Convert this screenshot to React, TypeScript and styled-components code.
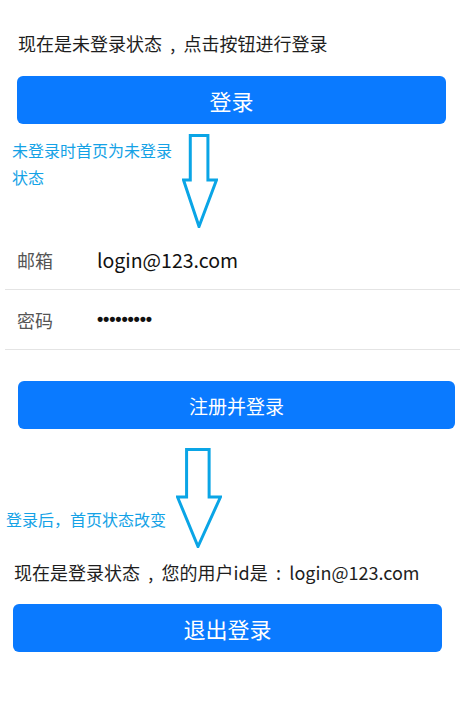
import React from "react";
import styled, { createGlobalStyle } from "styled-components";

const Global = createGlobalStyle`
  html, body { margin: 0; padding: 0; background: #fff; }
  body { font-family: "Noto Sans CJK SC", "Noto Sans", sans-serif; color: #222; }
`;

const Page = styled.div`
  width: 460px;
  display: flex;
  flex-direction: column;
`;

const StatusText = styled.div<{ $indent: number; $top: number }>`
  margin: ${(p) => p.$top}px 0 0 ${(p) => p.$indent}px;
  font-size: 18px;
  line-height: 24px;
  color: #1e1e1e;
  white-space: nowrap;
`;

const Punct = styled.span`
  display: inline-block;
  width: 1.2em;
  text-align: center;
`;

const BlueButton = styled.button<{ $left: number; $width: number; $top: number; $size: number }>`
  margin: ${(p) => p.$top}px 0 0 ${(p) => p.$left}px;
  width: ${(p) => p.$width}px;
  height: 48px;
  border: none;
  border-radius: 6px;
  background: #0a7aff;
  color: #fff;
  font-family: inherit;
  font-size: ${(p) => p.$size}px;
  display: flex;
  align-items: center;
  justify-content: center;
  padding: 0;
`;

const NoteRow = styled.div<{ $top: number }>`
  display: flex;
  align-items: flex-start;
  margin-top: ${(p) => p.$top}px;
`;

const Note = styled.div<{ $left: number; $width: number; $top: number }>`
  margin: ${(p) => p.$top}px 0 0 ${(p) => p.$left}px;
  width: ${(p) => p.$width}px;
  font-size: 16px;
  line-height: 27px;
  color: #14a2e6;
`;

const Form = styled.div`
  margin: 2px 0 0 5px;
  display: flex;
  flex-direction: column;
`;

const Field = styled.div`
  height: 59px;
  display: flex;
  align-items: center;
  border-bottom: 1.5px solid #e4e4e4;
`;

const Label = styled.span`
  width: 80px;
  padding-left: 12px;
  font-size: 18px;
  color: #555;
`;

const Value = styled.span`
  font-size: 19.5px;
  color: #111;
`;

const Dots = styled.span`
  font-family: "Liberation Sans", Arial, sans-serif;
  font-size: 18px;
  font-weight: 700;
  color: #111;
  letter-spacing: -0.2px;
`;

const Arrow = ({ width, height }: { width: number; height: number }) => {
  const sw = 3;
  const shaftL = width * 0.23;
  const shaftR = width * 0.72;
  const shaftB = height * 0.49;
  return (
    <svg width={width} height={height} viewBox={`0 0 ${width} ${height}`}>
      <polygon
        points={`${shaftL},${sw / 2} ${shaftR},${sw / 2} ${shaftR},${shaftB} ${width - sw / 2},${shaftB} ${width / 2 - 1},${height - sw / 2} ${sw / 2},${shaftB} ${shaftL},${shaftB}`}
        fill="none"
        stroke="#0aa5e6"
        strokeWidth={sw}
      />
    </svg>
  );
};

export default function App() {
  return (
    <Page>
      <Global />
      <StatusText $indent={18} $top={31}>
        现在是未登录状态<Punct>,</Punct>点击按钮进行登录
      </StatusText>
      <BlueButton $left={17} $width={429} $top={21} $size={22}>登录</BlueButton>
      <NoteRow $top={10}>
        <Note $left={12} $width={170} $top={3}>未登录时首页为未登录状态</Note>
        <Arrow width={36} height={94} />
      </NoteRow>
      <Form>
        <Field>
          <Label>邮箱</Label>
          <Value>login@123.com</Value>
        </Field>
        <Field>
          <Label>密码</Label>
          <Dots>•••••••••</Dots>
        </Field>
      </Form>
      <BlueButton $left={18} $width={437} $top={31} $size={19}>注册并登录</BlueButton>
      <NoteRow $top={19}>
        <Note $left={6} $width={170} $top={58}>登录后，首页状态改变</Note>
        <Arrow width={46} height={100} />
      </NoteRow>
      <StatusText $indent={14} $top={12}>
        现在是登录状态<Punct>,</Punct>您的用户id是<Punct>:</Punct>login@123.com
      </StatusText>
      <BlueButton $left={13} $width={429} $top={20} $size={22}>退出登录</BlueButton>
    </Page>
  );
}
